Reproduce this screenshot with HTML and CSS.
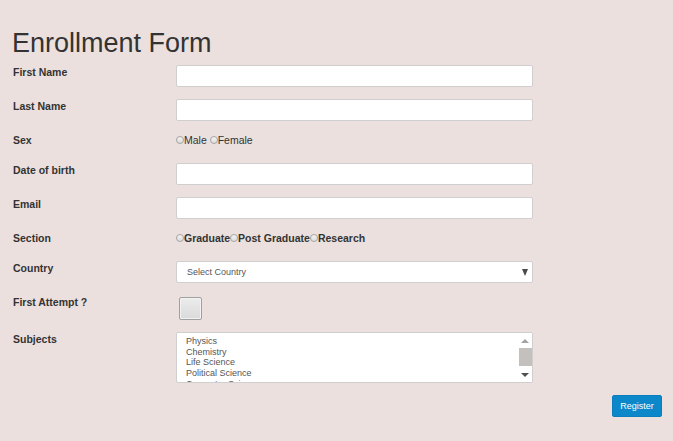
FILE: index.html
```html
<!DOCTYPE html>
<html lang="en">
<head>
<meta charset="utf-8">
<title>Enrollment Form</title>
<link rel="stylesheet" href="styles.css">
</head>
<body>
<div class="page">
  <h1 class="title">Enrollment Form</h1>
  <form class="form">
    <div class="row">
      <label class="lbl">First Name</label>
      <div class="ctl"><input class="field" type="text"></div>
    </div>
    <div class="row">
      <label class="lbl">Last Name</label>
      <div class="ctl"><input class="field" type="text"></div>
    </div>
    <div class="row row-radio">
      <label class="lbl">Sex</label>
      <div class="ctl radios"><input class="radio" type="radio" name="sex"><span class="opt">Male</span> <input class="radio" type="radio" name="sex"><span class="opt">Female</span></div>
    </div>
    <div class="row">
      <label class="lbl">Date of birth</label>
      <div class="ctl"><input class="field" type="text"></div>
    </div>
    <div class="row">
      <label class="lbl">Email</label>
      <div class="ctl"><input class="field" type="text"></div>
    </div>
    <div class="row row-radio">
      <label class="lbl">Section</label>
      <div class="ctl radios bold"><input class="radio" type="radio" name="sec"><span class="opt">Graduate</span><input class="radio" type="radio" name="sec"><span class="opt">Post Graduate</span><input class="radio" type="radio" name="sec"><span class="opt">Research</span></div>
    </div>
    <div class="row">
      <label class="lbl">Country</label>
      <div class="ctl"><div class="select-wrap"><select class="select"><option>Select Country</option></select></div></div>
    </div>
    <div class="row">
      <label class="lbl">First Attempt ?</label>
      <div class="ctl"><input class="check" type="checkbox"></div>
    </div>
    <div class="row">
      <label class="lbl">Subjects</label>
      <div class="ctl">
        <div class="listbox">
          <ul class="options">
            <li>Physics</li>
            <li>Chemistry</li>
            <li>Life Science</li>
            <li>Political Science</li>
            <li>Computer Science</li>
          </ul>
          <div class="scrollbar">
            <div class="sb-btn"><span class="arrow-up"></span></div>
            <div class="sb-thumb"></div>
            <div class="sb-btn"><span class="arrow-down"></span></div>
          </div>
        </div>
      </div>
    </div>
    <div class="actions">
      <button class="btn" type="button">Register</button>
    </div>
  </form>
</div>
</body>
</html>
```
FILE: styles.css
```css
html, body {
  margin: 0;
  padding: 0;
  background: #ebe0dd;
}

body {
  font-family: "Liberation Sans", Arial, sans-serif;
  color: #333;
}

.page {
  padding: 28px 11px 0 12px;
}

.title {
  margin: 0 0 7px 0;
  font-size: 27px;
  line-height: 30px;
  font-weight: normal;
  color: #333;
}

.form {
  margin: 0;
}

.row {
  display: flex;
  align-items: flex-start;
  margin-bottom: 12px;
}

.lbl {
  box-sizing: border-box;
  width: 164px;
  padding-left: 1px;
  flex: none;
  font-size: 10.5px;
  line-height: 15px;
  font-weight: bold;
  color: #333;
}

.ctl {
  flex: none;
}

.field {
  display: block;
  box-sizing: border-box;
  width: 357px;
  height: 22px;
  margin: 0;
  padding: 2px 8px;
  border: 1px solid #cfcfcf;
  border-radius: 2px;
  background: #fff;
  font-family: inherit;
  font-size: 9px;
}

.row-radio .ctl {
  height: 18px;
}

.radios {
  font-size: 10.5px;
  line-height: 15px;
  color: #333;
  white-space: nowrap;
}

.radios.bold {
  font-weight: bold;
}

.radio {
  -webkit-appearance: none;
  appearance: none;
  box-sizing: border-box;
  display: inline-block;
  width: 8px;
  height: 8px;
  margin: 0;
  border: 1px solid #a4a4a4;
  border-radius: 50%;
  background: linear-gradient(#f4f4f4, #dcdcdc);
  vertical-align: 0px;
}

.opt {
  display: inline;
}

.select-wrap {
  position: relative;
  width: 357px;
}

.select-wrap::after {
  content: "";
  position: absolute;
  right: 5px;
  top: 8px;
  width: 0;
  height: 0;
  border-left: 3.5px solid transparent;
  border-right: 3.5px solid transparent;
  border-top: 7px solid #4a4a4a;
  pointer-events: none;
}

.select {
  -webkit-appearance: none;
  appearance: none;
  display: block;
  box-sizing: border-box;
  width: 357px;
  height: 22px;
  margin: 0;
  padding: 0 0 0 10px;
  border: 1px solid #cfcfcf;
  border-radius: 2px;
  background: #fff;
  font-family: inherit;
  font-size: 9px;
  color: #555;
}

.check {
  -webkit-appearance: none;
  appearance: none;
  display: block;
  box-sizing: border-box;
  width: 23px;
  height: 23px;
  margin: 2px 0 0 3px;
  border: 1px solid #a0a0a0;
  border-radius: 2px;
  background: linear-gradient(#ececec, #dadada);
  box-shadow: inset 0 0 0 1px #f2f2f2;
}

.listbox {
  box-sizing: border-box;
  width: 357px;
  height: 51px;
  display: flex;
  border: 1px solid #cfcfcf;
  border-radius: 2px;
  background: #fff;
  overflow: hidden;
}

.options {
  flex: 1;
  margin: 0;
  padding: 3px 0 0 9px;
  list-style: none;
  font-size: 9px;
  line-height: 10.7px;
  color: #555;
  overflow: hidden;
}

.scrollbar {
  width: 14px;
  flex: none;
  display: flex;
  flex-direction: column;
  background: #fff;
}

.sb-btn {
  height: 15px;
  display: flex;
  align-items: center;
  justify-content: center;
  flex: none;
}

.sb-thumb {
  flex: 1;
  margin: 0 0 1px 1px;
  background: #c4c0bd;
}

.arrow-up {
  width: 0;
  height: 0;
  border-left: 4px solid transparent;
  border-right: 4px solid transparent;
  border-bottom: 4px solid #a3a3a3;
}

.arrow-down {
  width: 0;
  height: 0;
  border-left: 4px solid transparent;
  border-right: 4px solid transparent;
  border-top: 4px solid #505050;
}

.actions {
  display: flex;
  justify-content: flex-end;
}

.btn {
  width: 50px;
  height: 22px;
  margin: 0;
  padding: 0;
  border: 1px solid #0b7fbd;
  border-radius: 2px;
  background: #0c88ca;
  color: #fff;
  font-family: inherit;
  font-size: 9px;
}
```
